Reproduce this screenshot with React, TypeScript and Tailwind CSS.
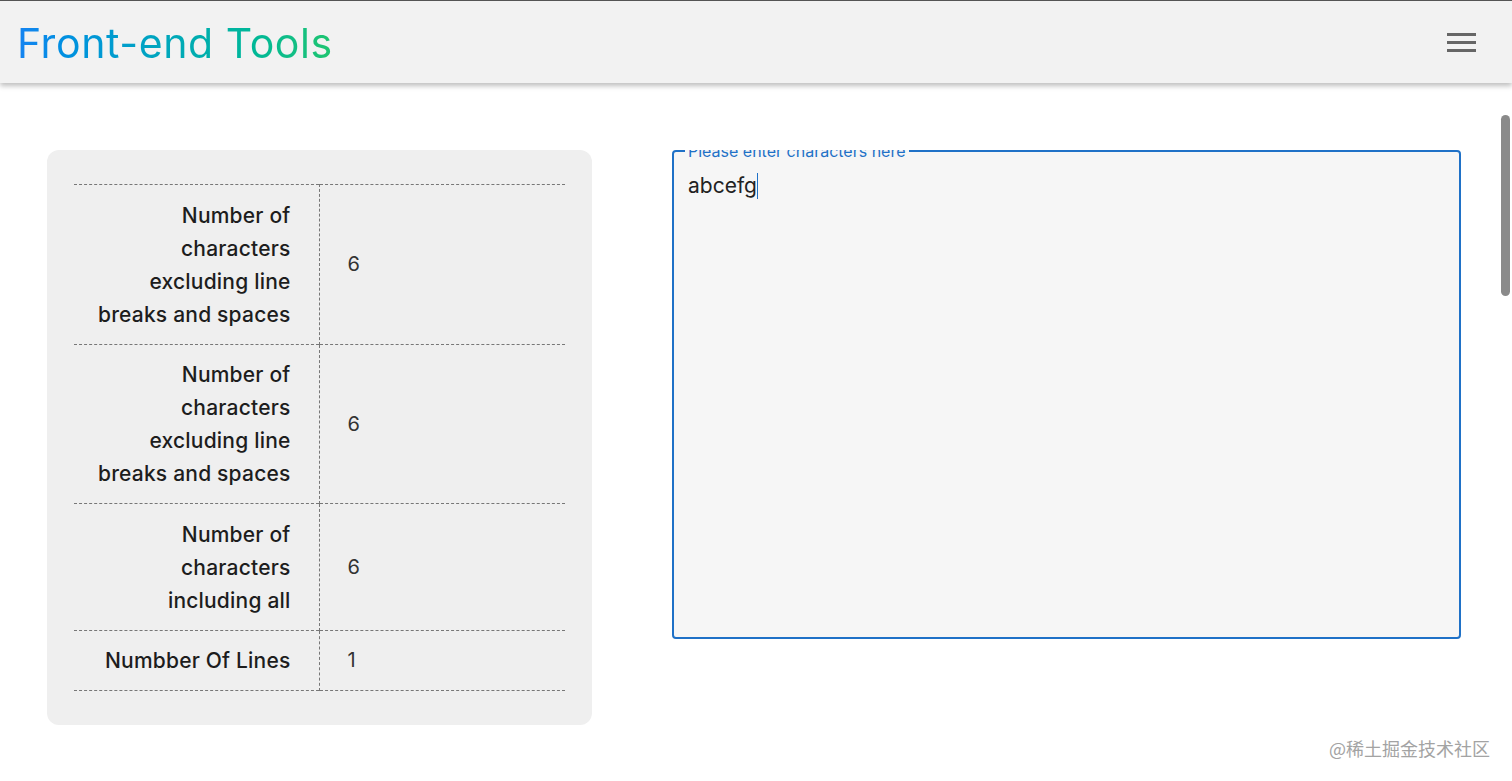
import React from "react";

const rows: { label: string[]; value: string }[] = [
  { label: ["Number of", "characters", "excluding line", "breaks and spaces"], value: "6" },
  { label: ["Number of", "characters", "excluding line", "breaks and spaces"], value: "6" },
  { label: ["Number of", "characters", "including all"], value: "6" },
  { label: ["Numbber Of Lines"], value: "1" },
];

export default function App() {
  return (
    <div
      className="relative min-h-[781px] bg-white text-[#222]"
      style={{ fontFamily: "Inter, 'Noto Sans', 'Noto Sans CJK SC', sans-serif" }}
    >
      <header className="relative z-10 h-[83px] border-t border-[#555] bg-[#f2f2f2] shadow-[0_3px_5px_rgba(0,0,0,0.25)] flex items-center justify-between pl-[17px] pr-[36px]">
        <h1 className="text-[41px] leading-none tracking-[0.6px] font-normal bg-gradient-to-r from-[#1583f1] to-[#1fc56f] bg-clip-text text-transparent pt-[2px]">
          Front-end Tools
        </h1>
        <div className="flex flex-col gap-[5px] w-[29px] mt-[1px]">
          <span className="block h-[3px] bg-[#666]" />
          <span className="block h-[3px] bg-[#666]" />
          <span className="block h-[3px] bg-[#666]" />
        </div>
      </header>

      <main className="flex items-start gap-[80px] pl-[47px] pr-[51px] pt-[67px]">
        <div className="w-[545px] shrink-0 rounded-[12px] bg-[#efefef] px-[27px] pt-[34px] pb-[34px]">
          <table className="w-full border-collapse text-[21px] leading-[33px]">
            <tbody>
              {rows.map((r, i) => (
                <tr key={i} className="border-y border-dashed border-[#777]">
                  <td className="w-[245px] border-r border-dashed border-[#777] pt-[13.5px] pb-[13px] pr-[28px] text-right font-medium tracking-[0.2px] text-[#1d1d1d]">
                    {r.label.map((l, j) => (
                      <div key={j} className="whitespace-nowrap">
                        {l}
                      </div>
                    ))}
                  </td>
                  <td className="pt-[13.5px] pb-[13px] pl-[28px] align-middle text-[20px] text-[#333]">{r.value}</td>
                </tr>
              ))}
            </tbody>
          </table>
        </div>

        <div className="flex-1 overflow-hidden">
          <fieldset className="relative h-[496px] -mt-[7px] rounded-[4px] border-2 border-[#1f71c7] bg-[#f6f6f6] px-[14px] pt-[10px]">
            <legend className="-ml-[3px] px-[3px] text-[16px] leading-[16px] text-[#1f71c7]">
              Please enter characters here
            </legend>
            <div className="flex items-center text-[21px] leading-[24px] text-[#222] pt-[4px]">
              <span>abcefg</span>
              <span className="inline-block h-[26px] w-[1.5px] bg-[#1f71c7]" />
            </div>
          </fieldset>
        </div>
      </main>

      <div className="absolute right-[2px] top-[115px] h-[181px] w-[9px] rounded-full bg-[#8a8a8a]" />

      <div
        className="absolute left-[1329px] top-[736px] text-[18px] leading-[24px] text-[#a3a3a3]"
        style={{ fontFamily: "'Noto Sans CJK SC', sans-serif" }}
      >
        @稀土掘金技术社区
      </div>
    </div>
  );
}
